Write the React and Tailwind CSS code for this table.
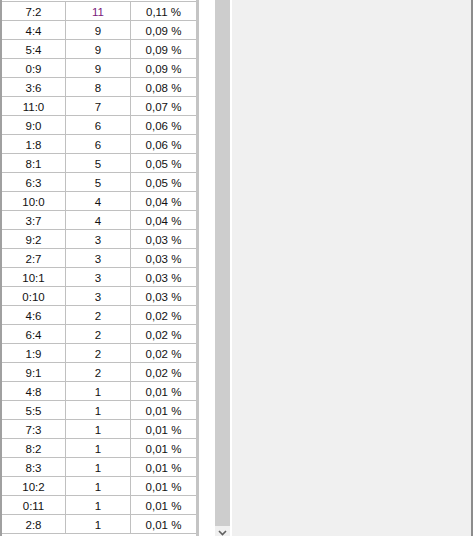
import React from 'react';

const rows = [
  ['7:2', '11', '0,11 %'],
  ['4:4', '9', '0,09 %'],
  ['5:4', '9', '0,09 %'],
  ['0:9', '9', '0,09 %'],
  ['3:6', '8', '0,08 %'],
  ['11:0', '7', '0,07 %'],
  ['9:0', '6', '0,06 %'],
  ['1:8', '6', '0,06 %'],
  ['8:1', '5', '0,05 %'],
  ['6:3', '5', '0,05 %'],
  ['10:0', '4', '0,04 %'],
  ['3:7', '4', '0,04 %'],
  ['9:2', '3', '0,03 %'],
  ['2:7', '3', '0,03 %'],
  ['10:1', '3', '0,03 %'],
  ['0:10', '3', '0,03 %'],
  ['4:6', '2', '0,02 %'],
  ['6:4', '2', '0,02 %'],
  ['1:9', '2', '0,02 %'],
  ['9:1', '2', '0,02 %'],
  ['4:8', '1', '0,01 %'],
  ['5:5', '1', '0,01 %'],
  ['7:3', '1', '0,01 %'],
  ['8:2', '1', '0,01 %'],
  ['8:3', '1', '0,01 %'],
  ['10:2', '1', '0,01 %'],
  ['0:11', '1', '0,01 %'],
  ['2:8', '1', '0,01 %'],
];

export default function App() {
  return (
    <div
      className="flex w-[473px] h-[536px] overflow-hidden bg-[#f0f0f0] border-r-2 border-[#8c8c8c]"
      style={{ fontFamily: '"Liberation Sans", Arial, sans-serif' }}
    >
      {/* results list */}
      <div className="flex w-[232px] h-full bg-white border-l-2 border-[#a0a0a0]">
        <div className="flex flex-col w-[197px] border-r-[3px] border-[#c4c4c4]">
          <div className="h-[1px]" />
          {rows.map(([score, count, pct], i) => (
            <div
              key={i}
              className="flex h-[19px] shrink-0 border-t border-[#c0c0c0] text-[11.5px] leading-none text-[#111]"
            >
              <div className="flex w-[64px] items-center justify-center pt-[3px] border-r border-[#c0c0c0]">
                {score}
              </div>
              <div
                className={`flex w-[65px] items-center justify-center pt-[3px] border-r border-[#c0c0c0] ${
                  i === 0 ? 'text-[#7a1a7a]' : ''
                }`}
              >
                {count}
              </div>
              <div className="flex flex-1 items-center justify-center pt-[3px]">{pct}</div>
            </div>
          ))}
          <div className="border-t border-[#c0c0c0]" />
        </div>
        <div className="w-[16px]" />
        {/* scrollbar */}
        <div className="flex flex-col w-[15px] h-full">
          <div className="flex-1 bg-[#cdcdcd]" />
          <div className="flex h-[10px] items-end justify-center bg-[#f0f0f0]">
            <svg width="9" height="6" viewBox="0 0 9 6">
              <path d="M1 1 L4.5 4.5 L8 1" fill="none" stroke="#606060" strokeWidth="1.6" />
            </svg>
          </div>
        </div>
        <div className="w-[2px]" />
      </div>
      <div className="flex-1" />
    </div>
  );
}
